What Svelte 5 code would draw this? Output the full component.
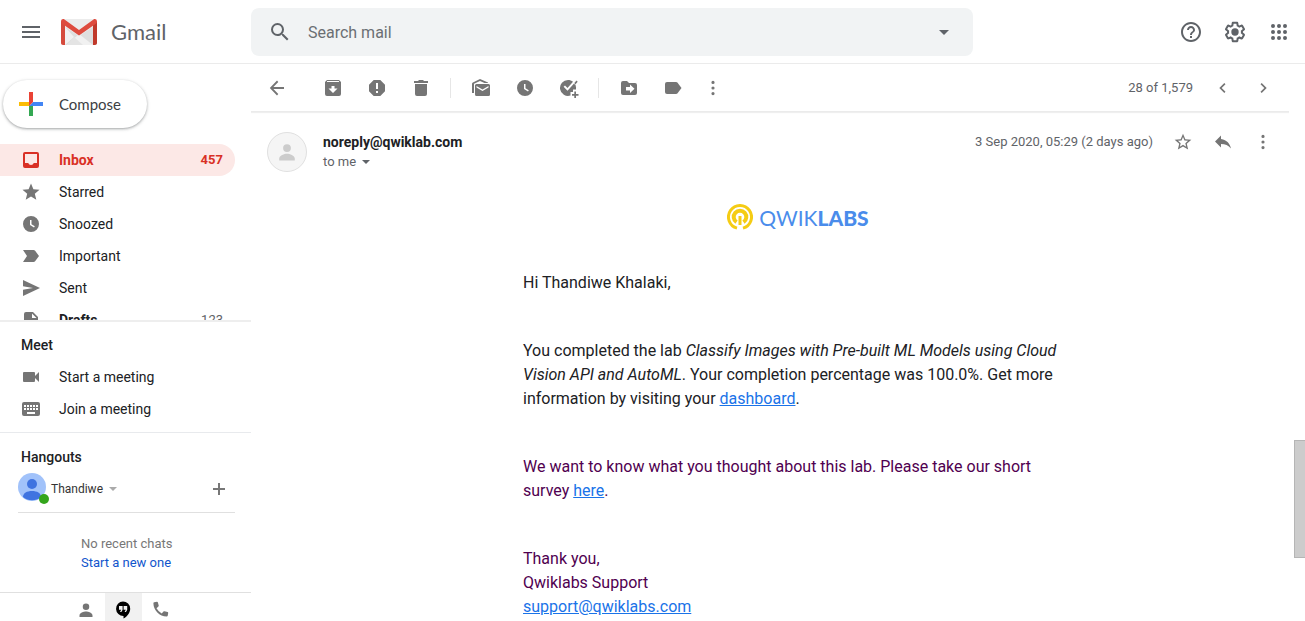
<script>
  const icons = {
    menu: { box: 24, d: 'M3 6h18v2H3zM3 11h18v2H3zM3 16h18v2H3z' },
    search: { box: 24, d: 'M15.5 14h-.79l-.28-.27A6.471 6.471 0 0 0 16 9.5 6.5 6.5 0 1 0 9.5 16c1.61 0 3.09-.59 4.23-1.57l.27.28v.79l5 4.99L20.49 19l-4.99-5zm-6 0C7.01 14 5 11.99 5 9.5S7.01 5 9.5 5 14 7.01 14 9.5 11.99 14 9.5 14z' },
    drop: { box: 20, d: 'M5 8l5 5 5-5z' },
    help: { box: 24, d: 'M11 18h2v-2h-2v2zm1-16C6.48 2 2 6.48 2 12s4.48 10 10 10 10-4.48 10-10S17.52 2 12 2zm0 18c-4.41 0-8-3.59-8-8s3.59-8 8-8 8 3.59 8 8-3.59 8-8 8zm0-14c-2.21 0-4 1.79-4 4h2c0-1.1.9-2 2-2s2 .9 2 2c0 2-3 1.75-3 5h2c0-2.25 3-2.5 3-5 0-2.21-1.79-4-4-4z' },
    settings: { box: 24, d: 'M13.85 22.25h-3.7c-.74 0-1.36-.54-1.45-1.27l-.27-1.89c-.27-.14-.53-.29-.79-.46l-1.8.72c-.7.26-1.47-.03-1.81-.65L2.2 15.53c-.35-.66-.2-1.44.36-1.88l1.53-1.19c-.01-.15-.02-.3-.02-.46 0-.15.01-.31.02-.46l-1.52-1.19c-.59-.45-.74-1.26-.37-1.88l1.85-3.19c.34-.62 1.11-.9 1.79-.63l1.81.73c.26-.17.52-.32.78-.46l.27-1.91c.09-.7.71-1.25 1.44-1.25h3.7c.74 0 1.36.54 1.45 1.27l.27 1.89c.27.14.53.29.79.46l1.8-.72c.71-.26 1.48.03 1.82.65l1.84 3.18c.36.66.2 1.44-.36 1.88l-1.52 1.19c.01.15.02.3.02.46s-.01.31-.02.46l1.52 1.19c.56.45.72 1.23.37 1.86l-1.86 3.22c-.34.62-1.11.9-1.8.63l-1.8-.72c-.26.17-.52.32-.78.46l-.27 1.91c-.1.68-.72 1.22-1.46 1.22zm-3.23-2h2.76l.37-2.55.53-.22c.44-.18.88-.44 1.34-.78l.45-.34 2.38.96 1.38-2.4-2.03-1.58.07-.56c.03-.26.06-.51.06-.78s-.03-.53-.06-.78l-.07-.56 2.03-1.58-1.39-2.4-2.39.96-.45-.35c-.42-.32-.87-.58-1.33-.77l-.52-.22-.37-2.55h-2.76l-.37 2.55-.53.21c-.44.19-.88.44-1.34.79l-.45.33-2.38-.95-1.39 2.39 2.03 1.58-.07.56a7 7 0 0 0-.06.79c0 .26.02.53.06.78l.07.56-2.03 1.58 1.38 2.4 2.39-.96.45.35c.43.33.86.58 1.33.77l.53.22zM12 8.3a3.7 3.7 0 1 1 0 7.4 3.7 3.7 0 0 1 0-7.4z' },
    apps: { box: 24, d: 'M6 8a2 2 0 1 0 0-4 2 2 0 0 0 0 4zm6 0a2 2 0 1 0 0-4 2 2 0 0 0 0 4zm6 0a2 2 0 1 0 0-4 2 2 0 0 0 0 4zM6 14a2 2 0 1 0 0-4 2 2 0 0 0 0 4zm6 0a2 2 0 1 0 0-4 2 2 0 0 0 0 4zm6 0a2 2 0 1 0 0-4 2 2 0 0 0 0 4zM6 20a2 2 0 1 0 0-4 2 2 0 0 0 0 4zm6 0a2 2 0 1 0 0-4 2 2 0 0 0 0 4zm6 0a2 2 0 1 0 0-4 2 2 0 0 0 0 4z' },
    inbox: { box: 20, d: 'M4 2h12a2 2 0 0 1 2 2v12a2 2 0 0 1-2 2H4a2 2 0 0 1-2-2V4a2 2 0 0 1 2-2zm0 2v9h3.2a3 3 0 0 0 5.6 0H16V4z' },
    star: { box: 20, d: 'M10 1.500l2.400 5.700 6.100.5-4.700 4 1.500 6.100L10 14.600l-5.300 3.200 1.500-6.100-4.700-4 6.100-.5z' },
    starOutline: { box: 24, d: 'M22 9.240l-7.190-.62L12 2 9.190 8.630 2 9.240l5.460 4.730L5.820 21 12 17.270 18.180 21l-1.630-7.030L22 9.240zM12 15.400l-3.760 2.270 1-4.280-3.320-2.880 4.380-.38L12 6.100l1.710 4.040 4.380.38-3.320 2.880 1 4.280L12 15.400z' },
    clock: { box: 20, d: 'M10 2a8 8 0 1 1 0 16 8 8 0 0 1 0-16zM9 6v5l4 2.400.8-1.200L10.500 10.200V6z' },
    important: { box: 20, d: 'M2 4h10.500c.7 0 1.200.3 1.600.8L18 10l-3.900 5.200c-.4.500-.9.800-1.600.8H2l4-6z' },
    sent: { box: 20, d: 'M2 2l17 8-17 8v-6.200L12 10 2 8.200z' },
    drafts: { box: 20, d: 'M5 2h7l5 5v9a2 2 0 0 1-2 2H5a2 2 0 0 1-2-2V4a2 2 0 0 1 2-2zm6 1.500V8h4.500z' },
    video: { box: 20, d: 'M3 5h10a1 1 0 0 1 1 1v3l4-4v10l-4-4v3a1 1 0 0 1-1 1H3a1 1 0 0 1-1-1V6a1 1 0 0 1 1-1z' },
    keyboard: { box: 20, d: 'M3 3h14a2 2 0 0 1 2 2v10a2 2 0 0 1-2 2H3a2 2 0 0 1-2-2V5a2 2 0 0 1 2-2zM3 6v2h2V6zm3 0v2h2V6zm3 0v2h2V6zm3 0v2h2V6zm3 0v2h2V6zM3 9v2h2V9zm3 0v2h2V9zm3 0v2h2V9zm3 0v2h2V9zm3 0v2h2V9zM6 13v2h8v-2z' },
    back: { box: 20, d: 'M17 9H6.400l4.900-5.100L10 2.500 2.800 10l7.200 7.500 1.300-1.400L6.400 11H17z' },
    archive: { box: 20, d: 'M4 2h12l2 2v12a2 2 0 0 1-2 2H4a2 2 0 0 1-2-2V4zM4 3v1h12V3zM8.500 8v2.500h-3L10 15l4.500-4.500h-3V8z' },
    spam: { box: 20, d: 'M6.700 2h6.600L18 6.700v6.600L13.300 18H6.700L2 13.300V6.700zM9 5v6h2V5zm0 8v2h2v-2z' },
    trash: { box: 20, d: 'M3 3h4l1-1h4l1 1h4v2H3zM4 6h12v10a2 2 0 0 1-2 2H6a2 2 0 0 1-2-2z' },
    unread: { box: 20, d: 'M1 15V6c0-.7.300-1.200.9-1.500L9 1l8 3.500V5h-3.500L9 3 3 5.800V15zM5.500 6h12A1.500 1.500 0 0 1 19 7.500v9a1.500 1.500 0 0 1-1.500 1.500h-12A1.500 1.500 0 0 1 4 16.500v-9A1.500 1.500 0 0 1 5.500 6zm0 2v1.500l6 3.500 6-3.500V8l-6 3.500z' },
    task: { box: 20, d: 'M9 2c1.900 0 3.600.6 5 1.700L8.500 9.900 6 7.400 4.600 8.800l3.900 3.900 7-7.800A8 8 0 0 1 17 10.500v1h-3V14h-2.500v3.600A8 8 0 1 1 9 2zM17.500 2.500l1.200 1.200-2.600 3-1.200-1.300zM15.300 13.500H17V16h2.500v1.700H17v2.300h-1.700v-2.300H13V16h2.300z' },
    move: { box: 20, d: 'M4 3h4l2 2h6a2 2 0 0 1 2 2v8a2 2 0 0 1-2 2H4a2 2 0 0 1-2-2V5a2 2 0 0 1 2-2zm3 6v3.500h4V15l4.500-4.200L11 6.500V9z' },
    label: { box: 20, d: 'M4 4h9c.6 0 1.200.3 1.600.8L18.500 10l-3.900 5.200c-.4.500-1 .8-1.600.8H4a2 2 0 0 1-2-2V6a2 2 0 0 1 2-2z' },
    more: { box: 20, d: 'M10 6a1.600 1.600 0 1 0 0-3.200A1.600 1.600 0 0 0 10 6zm0 5.600a1.600 1.600 0 1 0 0-3.200 1.600 1.600 0 0 0 0 3.200zm0 5.600a1.600 1.600 0 1 0 0-3.200 1.600 1.600 0 0 0 0 3.200z' },
    prev: { box: 20, d: 'M12.500 6.200L8.700 10l3.800 3.800-1.200 1.200-5-5 5-5z' },
    next: { box: 20, d: 'M7.500 6.200l3.800 3.800-3.800 3.800L8.700 15l5-5-5-5z' },
    reply: { box: 20, d: 'M8 7V3.500L2 9.500l6 6V12c4.200 0 7.500 1.300 10 4.500C17 12 14 7.800 8 7z' },
    person: { box: 20, d: 'M10 3.500a3.250 3.250 0 1 1 0 6.500 3.250 3.250 0 0 1 0-6.500zM3.500 17v-1.500c0-2.600 4.300-4 6.500-4s6.500 1.400 6.500 4V17z' },
    hangouts: { box: 20, d: 'M10 1.500a7.200 7.200 0 0 1 7.200 7.200c0 3.700-2.800 7.700-6.700 9.800v-2.600A7.200 7.200 0 1 1 10 1.500zM6 6v3.700h2.200L7 12h1.400l1.200-2.300V6zm4.600 0v3.700h2.200L11.600 12H13l1.200-2.300V6z' },
    phone: { box: 20, d: 'M4.200 2.300L7 1.800c.5 0 .8.200.9.600l.8 3.100c.1.400 0 .7-.3 1L6.500 8.300a13 13 0 0 0 5.200 5.200l1.800-1.900c.3-.3.600-.4 1-.3l3.100.8c.4.100.6.400.6.900l-.5 2.800c-.1.500-.5.800-1 .8C9.500 16.500 3.500 10.500 3.400 3.300c0-.5.300-.9.800-1z' },
    add: { box: 20, d: 'M9 4h2v5h5v2h-5v5H9v-5H4V9h5z' }
  };

  const folders = [
    { icon: 'inbox', name: 'Inbox', count: '457', active: true },
    { icon: 'star', name: 'Starred' },
    { icon: 'clock', name: 'Snoozed' },
    { icon: 'important', name: 'Important' },
    { icon: 'sent', name: 'Sent' },
    { icon: 'drafts', name: 'Drafts', count: '123', unread: true }
  ];

  const actionGroups = [
    [['archive', 'Archive'], ['spam', 'Report spam'], ['trash', 'Delete']],
    [['unread', 'Mark as unread'], ['clock', 'Snooze'], ['task', 'Add to tasks']],
    [['move', 'Move to'], ['label', 'Labels']]
  ];
</script>

{#snippet icon(name, size = 20)}
  <svg width={size} height={size} viewBox="0 0 {icons[name].box} {icons[name].box}" fill="currentColor" fill-rule={icons[name].box === 20 ? 'evenodd' : 'nonzero'} aria-hidden="true">
    <path d={icons[name].d} />
  </svg>
{/snippet}

<div class="app">
  <header>
    <div class="brand">
      <button class="plain" aria-label="Main menu">{@render icon('menu', 24)}</button>
      <a class="logo" href="#inbox">
        <svg width="36" height="26" viewBox="0 0 36 26" aria-hidden="true">
          <path fill="#ececec" d="M2 0h32v26H2z" />
          <path fill="#dedede" d="M4 8l14 9 14-9v18H4z" />
          <path fill="#f1f1f1" d="M4 8l9 10-9 8zM6 26l12-11 14 11z" />
          <path fill="#e4e4e4" d="M6 26l7-8 9 8z" />
          <path fill="#d54b3d" d="M0 2v22c0 1.200.8 2 2 2h2V6z" />
          <path fill="#c0392b" d="M36 2v22c0 1.200-.8 2-2 2h-2V6z" />
          <path fill="#de4b3e" d="M0 2.500C0 .3 2-.5 3.500.5L18 11 32.500.5C34-.5 36 .3 36 2.500c0 1-.4 1.700-1.200 2.300L18 16.500 1.200 4.800C.4 4.200 0 3.500 0 2.500z" />
        </svg>
        <span>Gmail</span>
      </a>
    </div>
    <form class="search" role="search">
      <button type="button" class="plain" aria-label="Search">{@render icon('search', 24)}</button>
      <input type="text" placeholder="Search mail" aria-label="Search mail" />
      <button type="button" class="plain" aria-label="Search options">{@render icon('drop')}</button>
    </form>
    <div class="tools">
      <button class="plain" aria-label="Support">{@render icon('help', 24)}</button>
      <button class="plain" aria-label="Settings">{@render icon('settings', 24)}</button>
      <button class="plain" aria-label="Google apps">{@render icon('apps', 24)}</button>
    </div>
  </header>

  <aside>
    <button class="compose">
      <svg width="24" height="24" viewBox="0 0 24 24" aria-hidden="true">
        <path fill="#fbbc04" d="M0 10h11v4H0z" />
        <path fill="#34a853" d="M10 14h4v10h-4z" />
        <path fill="#4285f4" d="M14 10h10v4H10z" />
        <path fill="#ea4335" d="M10 0h4v10l-4 4z" />
      </svg>
      Compose
    </button>
    <nav class="folders">
      {#each folders as f}
        <a href="#{f.name}" class="row" class:active={f.active} class:unread={f.unread}>
          {@render icon(f.icon)}
          <span class="name">{f.name}</span>
          {#if f.count}<span class="count">{f.count}</span>{/if}
        </a>
      {/each}
    </nav>
    <section class="meet">
      <h2>Meet</h2>
      <a href="#start" class="row">{@render icon('video')}<span class="name">Start a meeting</span></a>
      <a href="#join" class="row">{@render icon('keyboard')}<span class="name">Join a meeting</span></a>
    </section>
    <section class="hangouts">
      <h2>Hangouts</h2>
      <div class="user">
        <span class="avatar">
          <svg width="28" height="28" viewBox="0 0 28 28" aria-hidden="true">
            <circle cx="14" cy="14" r="14" fill="#a1c2fa" />
            <circle cx="14" cy="11" r="5" fill="#3f73e0" />
            <path fill="#3f73e0" d="M5 24c0-4 4-6 9-6s9 2 9 6a14 14 0 0 1-18 0z" />
          </svg>
          <i class="online"></i>
        </span>
        <button class="plain who">Thandiwe <i class="caret"></i></button>
        <button class="plain add" aria-label="New conversation">{@render icon('add')}</button>
      </div>
      <p class="empty">No recent chats<br /><a href="#chat">Start a new one</a></p>
    </section>
    <div class="tabs">
      <button class="plain" aria-label="Contacts">{@render icon('person')}</button>
      <button class="plain current" aria-label="Hangouts conversations">{@render icon('hangouts')}</button>
      <button class="plain" aria-label="Phone calls">{@render icon('phone')}</button>
    </div>
  </aside>

  <main>
    <div class="toolbar">
      <button class="plain back" aria-label="Back to Inbox">{@render icon('back')}</button>
      {#each actionGroups as group}
        <div class="group">
          {#each group as [name, label]}
            <button class="plain" aria-label={label}>{@render icon(name)}</button>
          {/each}
        </div>
      {/each}
      <button class="plain extra" aria-label="More">{@render icon('more')}</button>
      <span class="position">28 of 1,579</span>
      <button class="plain page" aria-label="Newer">{@render icon('prev')}</button>
      <button class="plain page" aria-label="Older">{@render icon('next')}</button>
    </div>
    <article>
      <div class="sender">
        <span class="face">{@render icon('person', 24)}</span>
        <div class="from">
          <strong>noreply@qwiklab.com</strong>
          <button class="plain tome">to me <i class="caret"></i></button>
        </div>
        <div class="meta">
          <time datetime="2020-09-03T05:29">3 Sep 2020, 05:29 (2 days ago)</time>
          <button class="plain" aria-label="Star">{@render icon('starOutline')}</button>
          <button class="plain" aria-label="Reply">{@render icon('reply')}</button>
          <button class="plain" aria-label="More">{@render icon('more')}</button>
        </div>
      </div>
      <div class="body">
        <div class="message">
          <div class="qwik">
            <svg width="26" height="26" viewBox="0 0 26 26" aria-hidden="true" fill="none" stroke="#f5cc14">
              <path stroke-width="3" d="M10 24.100A11.500 11.500 0 1 1 16 24.100" />
              <path stroke-width="4" d="M9.500 18.200A6.300 6.300 0 1 1 16.500 18.200" />
              <path stroke-width="3" d="M13 12v9" />
            </svg>
            <span>QWIK<b>LABS</b></span>
          </div>
          <p>Hi Thandiwe Khalaki,</p>
          <p>You completed the lab <em>Classify Images with Pre-built ML Models using Cloud Vision API and AutoML</em>. Your completion percentage was 100.0%. Get more information by visiting your <a href="#dashboard">dashboard</a>.</p>
          <p class="quoted">We want to know what you thought about this lab. Please take our short survey <a href="#survey">here</a>.</p>
          <p class="quoted">Thank you,<br />Qwiklabs Support<br /><a href="mailto:support@qwiklabs.com">support@qwiklabs.com</a></p>
        </div>
      </div>
    </article>
  </main>
  <div class="rail"><div class="thumb"></div></div>
</div>

<style>
  :global(body) { margin: 0; background: #fff; }
  .app {
    display: grid;
    grid-template-columns: 251px minmax(0, 1fr) 16px;
    grid-template-rows: 64px minmax(0, 1fr);
    height: 100vh;
    overflow: hidden;
    font: 14px/20px Roboto, "Liberation Sans", sans-serif;
    color: #202124;
  }
  * { box-sizing: border-box; }
  svg { display: block; flex: none; }
  a { text-decoration: none; color: inherit; }
  .plain {
    display: flex;
    align-items: center;
    justify-content: center;
    padding: 0;
    border: 0;
    background: none;
    font: inherit;
    color: inherit;
  }
  header {
    grid-column: 1 / -1;
    display: flex;
    align-items: center;
    border-bottom: 1px solid #ebebeb;
    color: #5f6368;
  }
  .brand { display: flex; align-items: center; gap: 18px; flex: 0 0 251px; padding-left: 19px; }
  .logo { display: flex; align-items: center; gap: 14px; font: 22px/24px Lato, Roboto, sans-serif; }
  .search {
    display: flex;
    align-items: center;
    flex: 0 1 722px;
    height: 48px;
    padding: 0 19px 0 17px;
    border-radius: 8px;
    background: #f1f3f4;
  }
  .search input {
    flex: 1;
    min-width: 0;
    padding: 2px 16px 0;
    border: 0;
    outline: 0;
    background: none;
    font: 16px/24px Roboto, sans-serif;
  }
  .search input::placeholder { color: #6b6f73; opacity: 1; }
  .tools { display: flex; gap: 20px; margin-left: auto; padding: 0 14px 0 20px; }

  aside { display: flex; flex-direction: column; min-height: 0; }
  .compose {
    display: flex;
    align-items: center;
    gap: 16px;
    flex: none;
    align-self: flex-start;
    height: 48px;
    margin: 16px 0 16px 3px;
    padding: 0 26px 0 16px;
    border: 0;
    border-radius: 24px;
    background: #fff;
    box-shadow: 0 1px 2px rgba(60, 64, 67, .3), 0 1px 3px 1px rgba(60, 64, 67, .15);
    font: 15px/20px Lato, Roboto, sans-serif;
    color: #3c4043;
  }
  .folders { flex: 1; min-height: 0; overflow: hidden; }
  .row {
    display: flex;
    align-items: center;
    gap: 18px;
    height: 32px;
    margin-right: 16px;
    padding: 0 12px 0 21px;
    border-radius: 0 16px 16px 0;
  }
  .row svg { color: #757575; }
  .name { flex: 1; }
  .count { font-size: 13px; color: #5f6368; }
  .unread .name { font-weight: 700; }
  .active, .active svg, .active .count { color: #d93025; font-weight: 700; }
  .active { background: #fce8e6; }
  h2 { margin: 0; padding-left: 21px; font: 500 14px/20px Roboto, sans-serif; }
  .meet {
    padding: 13px 0 7px;
    border-top: 2px solid #eee;
    border-bottom: 1px solid #e8eaed;
  }
  .meet h2 { margin-bottom: 6px; }
  .hangouts { padding-top: 14px; }
  .user {
    display: flex;
    align-items: flex-start;
    height: 46px;
    margin: 0 16px 0 18px;
    padding-top: 6px;
    border-bottom: 1px solid #e0e0e0;
    font-size: 12px;
  }
  .user button { height: 32px; }
  .avatar { position: relative; }
  .online {
    position: absolute;
    right: -3px;
    bottom: -3px;
    width: 10px;
    height: 10px;
    border-radius: 50%;
    background: #34a51c;
  }
  .who { padding-left: 5px; gap: 6px; color: #333; }
  .who .caret { color: #aaa; }
  .add { margin-left: auto; padding-right: 6px; color: #777; }
  .caret { border: 4px solid transparent; border-top-color: currentColor; border-bottom: 0; }
  .empty { margin: 21px 0 20px 81px; font-size: 13px; line-height: 19px; color: #777; }
  .empty a { color: #15c; }
  .tabs { display: flex; justify-content: center; flex: none; height: 29px; padding-right: 5px; border-top: 1px solid #e0e0e0; color: #757575; }
  .tabs button { width: 37px; padding-top: 5px; }
  .tabs .current { background: #f1f1f1; color: #000; }

  main { min-width: 0; overflow: hidden; }
  .toolbar {
    display: flex;
    align-items: center;
    height: 48px;
    padding-right: 6px;
    box-shadow: inset 0 -1px 0 #ebebeb, 0 1px 1px #efefef;
    color: #757575;
  }
  .toolbar button { width: 44px; height: 40px; }
  .toolbar .back { margin: 0 12px 0 4px; }
  .group { display: flex; align-items: center; }
  .group + .group::before { content: ""; width: 1px; height: 20px; margin: 0 8px 0 7px; background: #e6e6e6; }
  .toolbar .extra { width: 36px; }
  .position { margin-left: auto; padding-right: 10px; font-size: 13px; color: #5f6368; }
  .toolbar .page { width: 40px; }
  article { padding: 20px 16px; }
  .sender { display: flex; gap: 16px; }
  .face {
    display: flex;
    align-items: center;
    justify-content: center;
    width: 40px;
    height: 40px;
    border: 1px solid #e0e0e0;
    border-radius: 50%;
    background: #f5f5f5;
    color: #ccc;
  }
  .tome { gap: 6px; font-size: 13px; line-height: 20px; color: #5f6368; }
  .meta { display: flex; gap: 20px; height: 20px; margin-left: auto; color: #757575; }
  .meta time { font-size: 13px; color: #5f6368; }
  .body { padding-left: 56px; }
  .message { max-width: 550px; margin: 0 auto; font-size: 16px; line-height: 24px; }
  .qwik { display: flex; align-items: center; justify-content: center; gap: 6px; margin: 32px 0 41px; font: 21px/25px Lato, sans-serif; color: #4a8ceb; }
  .qwik b { font-weight: 900; }
  p { margin: 0 0 44px; }
  .message a { color: #1a73e8; text-decoration: underline; }
  .quoted { color: #500050; }
  .rail { display: flex; flex-direction: column; align-items: flex-end; }
  .rail::before { content: ""; flex: 377; }
  .rail::after { content: ""; flex: 63; }
  .thumb { flex: 117; width: 11px; border: 1px solid #b5b5b5; border-right: 0; background: #ccc; }
</style>
